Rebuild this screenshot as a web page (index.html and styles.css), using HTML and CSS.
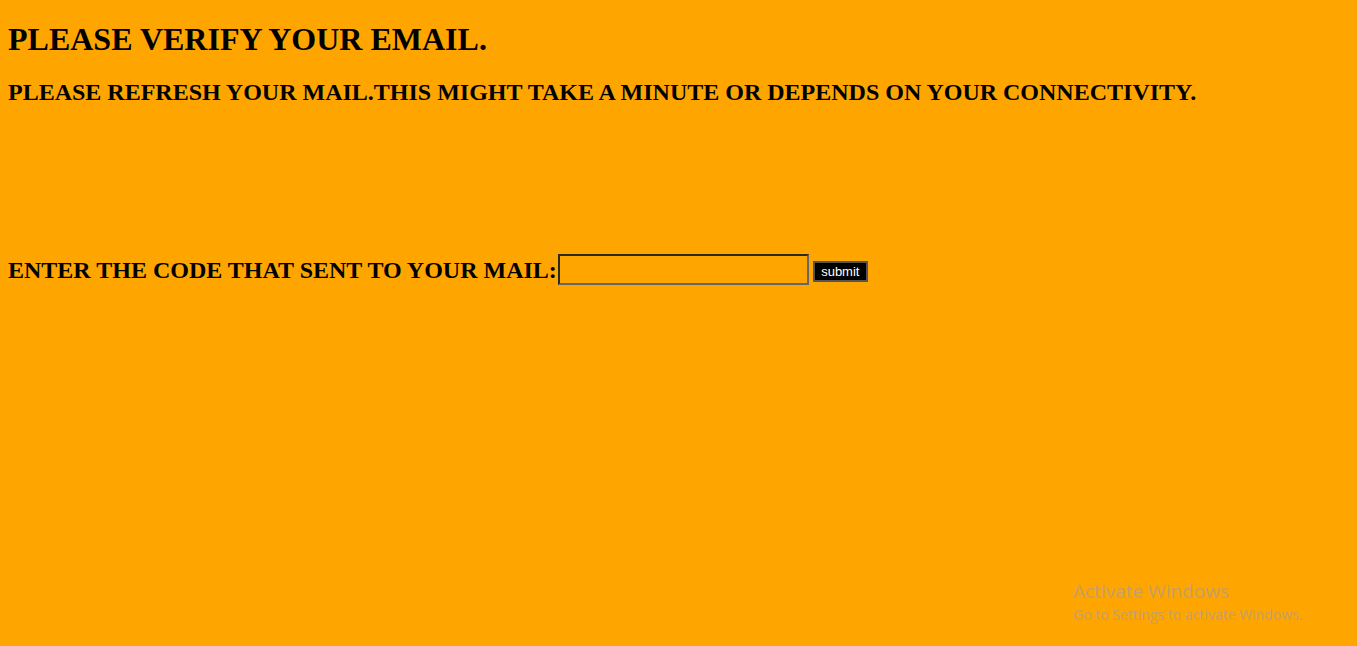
FILE: index.html
```html
<!DOCTYPE html>
<html>
<head>
<meta charset="utf-8">
<title>Verify Email</title>
<link rel="stylesheet" href="styles.css">
</head>
<body>
<h1 class="title">PLEASE VERIFY YOUR EMAIL.</h1>
<h2 class="subtitle">PLEASE REFRESH YOUR MAIL.THIS MIGHT TAKE A MINUTE OR DEPENDS ON YOUR CONNECTIVITY.</h2>
<form class="code-form">
  <label class="code-label" for="code">ENTER THE CODE THAT SENT TO YOUR MAIL:</label><input class="code-input" id="code" type="text"><button class="submit-btn" type="button">submit</button>
</form>
<div class="watermark">
  <div class="wm-title">Activate Windows</div>
  <div class="wm-sub">Go to Settings to activate Windows.</div>
</div>
</body>
</html>
```
FILE: styles.css
```css
html, body {
  background: #ffa500;
}
body {
  margin: 0 8px;
  padding-top: 1px;
  font-family: "Liberation Serif", "Times New Roman", serif;
  color: #000;
}
.title {
  font-size: 32px;
  font-weight: bold;
  margin: 20px 0 21px;
}
.subtitle {
  font-size: 24px;
  font-weight: bold;
  margin: 20px 0;
}
.code-form {
  margin-top: 147px;
  display: flex;
  align-items: flex-start;
}
.code-label {
  font-size: 24px;
  font-weight: bold;
  line-height: 28px;
  padding-top: 3px;
}
.code-input {
  width: 251px;
  height: 31px;
  box-sizing: border-box;
  background: transparent;
  border: 2px solid #666;
  border-top-color: #2a2a2a;
  border-left-color: #2a2a2a;
  margin: 1px 4px 0 1px;
  padding: 0;
}
.submit-btn {
  background: #000;
  color: #fff;
  font-family: "Liberation Sans", Arial, sans-serif;
  font-size: 13px;
  font-weight: normal;
  line-height: 15px;
  border: 2px solid #555;
  padding: 0 6px;
  height: 21px;
  width: 55px;
  margin-top: 8px;
}
.watermark {
  position: absolute;
  left: 1073px;
  top: 578px;
  font-family: "Open Sans", "Noto Sans", sans-serif;
  color: #c4a06a;
}
.wm-title {
  font-size: 19px;
  line-height: 27px;
}
.wm-sub {
  font-size: 14px;
  line-height: 20px;
}
```
